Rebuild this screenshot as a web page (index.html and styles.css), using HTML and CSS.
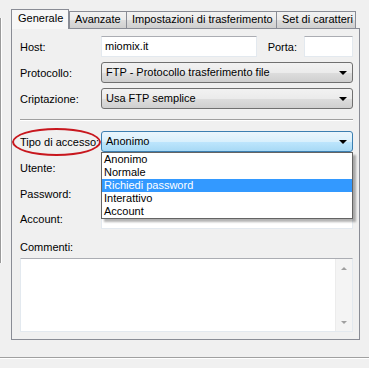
FILE: index.html
```html
<!DOCTYPE html>
<html lang="it">
  <head>
    <meta charset="UTF-8" />
    <title>Gestore siti</title>
    <link rel="stylesheet" href="styles.css">
  </head>
  <body>
    <div class="screen">
      <div class="side"></div>

      <div class="dialog">
        <div class="tabs">
          <div class="tab active">Generale</div>
          <div class="tab">Avanzate</div>
          <div class="tab">Impostazioni di trasferimento</div>
          <div class="tab">Set di caratteri</div>
        </div>

        <div class="panel">
          <div class="row">
            <span class="label">Host:</span>
            <div class="input host">miomix.it</div>
            <span class="label porta-label">Porta:</span>
            <div class="input porta"></div>
          </div>

          <div class="row">
            <span class="label">Protocollo:</span>
            <div class="select">FTP - Protocollo trasferimento file<span class="arrow"></span></div>
          </div>

          <div class="row">
            <span class="label">Criptazione:</span>
            <div class="select">Usa FTP semplice<span class="arrow"></span></div>
          </div>

          <div class="sep"></div>

          <div class="row access">
            <span class="label">Tipo di accesso:</span>
            <span class="ring"></span>
            <div class="select focused">Anonimo<span class="arrow"></span></div>
            <ul class="dropdown">
              <li>Anonimo</li>
              <li>Normale</li>
              <li class="selected">Richiedi password</li>
              <li>Interattivo</li>
              <li>Account</li>
            </ul>
          </div>

          <div class="row user">
            <span class="label">Utente:</span>
            <div class="input wide"></div>
          </div>

          <div class="row pass">
            <span class="label">Password:</span>
            <div class="input wide"></div>
          </div>

          <div class="row account">
            <span class="label">Account:</span>
            <div class="input wide"></div>
          </div>

          <div class="comment-label">Commenti:</div>
          <div class="textarea">
            <div class="scrollbar">
              <span class="up"></span>
              <span class="down"></span>
            </div>
          </div>
        </div>
      </div>
    </div>

    <div class="bottom-line"></div>
  </body>
</html>
```

FILE: styles.css
```css
* {
  box-sizing: border-box;
}

body {
  margin: 0;
  background: #f0f0f0;
  font-family: "Liberation Sans", Arial, sans-serif;
  font-size: 11px;
  color: #000;
  width: 369px;
  height: 368px;
  overflow: hidden;
}

.screen {
  display: flex;
  gap: 9px;
  height: 357px;
}

/* edge of the window behind */
.side {
  width: 2px;
  margin-top: 18px;
  height: 245px;
  border-left: 1px solid #9a9a9a;
  border-right: 1px solid #ffffff;
}

.dialog {
  width: 349px;
  margin-top: 9px;
}

.tabs {
  display: flex;
  align-items: flex-end;
  height: 19px;
  position: relative;
  z-index: 1;
}

.tab {
  height: 17px;
  padding: 0 5px;
  line-height: 15px;
  border: 1px solid #898c95;
  border-bottom: none;
  margin-right: -1px;
  background: linear-gradient(#f2f2f2, #ebebeb 50%, #dddddd 51%, #cfcfcf);
  white-space: nowrap;
}

.tab.active {
  height: 20px;
  margin-bottom: -1px;
  padding: 0 6px;
  line-height: 17px;
  background: #f7f7f7;
  margin-right: 0;
}

.tab:nth-child(1) { width: 58px; }
.tab:nth-child(2) { width: 58px; }
.tab:nth-child(3) { width: 151px; }
.tab:nth-child(4) { width: 80px; }

.panel {
  border: 1px solid #898c95;
  background: #f0f0f0;
  padding: 7px 6px 7px 8px;
  height: 312px;
}

.row {
  display: flex;
  align-items: center;
  height: 21px;
  margin-bottom: 5px;
  position: relative;
}

.label {
  width: 81px;
  flex-shrink: 0;
}

.input {
  height: 21px;
  background: #fff;
  border: 1px solid #e3e9ef;
  border-top-color: #abadb3;
  line-height: 19px;
  padding-left: 3px;
}

.input.host {
  width: 156px;
}

.porta-label {
  width: auto;
  margin-left: auto;
}

.input.porta {
  width: 49px;
  margin-left: 7px;
}

.input.wide {
  flex: 1;
}

.select {
  flex: 1;
  height: 21px;
  line-height: 19px;
  padding-left: 4px;
  border: 1px solid #707070;
  border-radius: 3px;
  background: linear-gradient(#f2f2f2, #ebebeb 50%, #dddddd 51%, #cfcfcf);
  position: relative;
}

.select.focused {
  border-color: #3c7fb1;
  background: linear-gradient(#eaf6fd, #d9f0fc 50%, #bee6fd 51%, #a7d9f5);
}

.arrow {
  position: absolute;
  right: 5px;
  top: 8px;
  border-left: 4px solid transparent;
  border-right: 4px solid transparent;
  border-top: 4px solid #000;
}

.sep {
  background: #a0a0a0;
  border-bottom: 1px solid #fff;
  margin: 10px 0;
  height: 2px;
}

.ring {
  position: absolute;
  left: -8px;
  top: -3px;
  width: 89px;
  height: 28px;
  border: 2px solid #c8171e;
  border-radius: 50%;
  pointer-events: none;
}

.dropdown {
  position: absolute;
  left: 81px;
  right: 0;
  top: 21px;
  margin: 0;
  padding: 0;
  list-style: none;
  background: #fff;
  border: 1px solid #646464;
  box-shadow: 3px 3px 2px rgba(0, 0, 0, 0.3);
  z-index: 2;
}

.dropdown li {
  height: 13px;
  line-height: 13px;
  padding-left: 2px;
}

.dropdown li.selected {
  background: #3399ff;
  color: #fff;
}

.row.pass,
.row.account {
  margin-bottom: 4px;
}

.row.account {
  margin-top: 1px;
}

.comment-label {
  margin-top: 11px;
  height: 14px;
  line-height: 14px;
}

.textarea {
  margin-top: 4px;
  height: 74px;
  background: #fff;
  border: 1px solid #e3e9ef;
  border-top-color: #abadb3;
  display: flex;
  justify-content: flex-end;
}

.scrollbar {
  width: 17px;
  background: #f4f4f4;
  border-left: 1px solid #ececec;
  display: flex;
  flex-direction: column;
  justify-content: space-between;
  align-items: center;
  padding: 8px 0 7px;
}

.scrollbar .up {
  border-left: 3px solid transparent;
  border-right: 3px solid transparent;
  border-bottom: 3px solid #a0a0a0;
}

.scrollbar .down {
  border-left: 3px solid transparent;
  border-right: 3px solid transparent;
  border-top: 3px solid #a0a0a0;
}

.bottom-line {
  height: 2px;
  background: #a0a0a0;
  border-bottom: 1px solid #fff;
}
```
